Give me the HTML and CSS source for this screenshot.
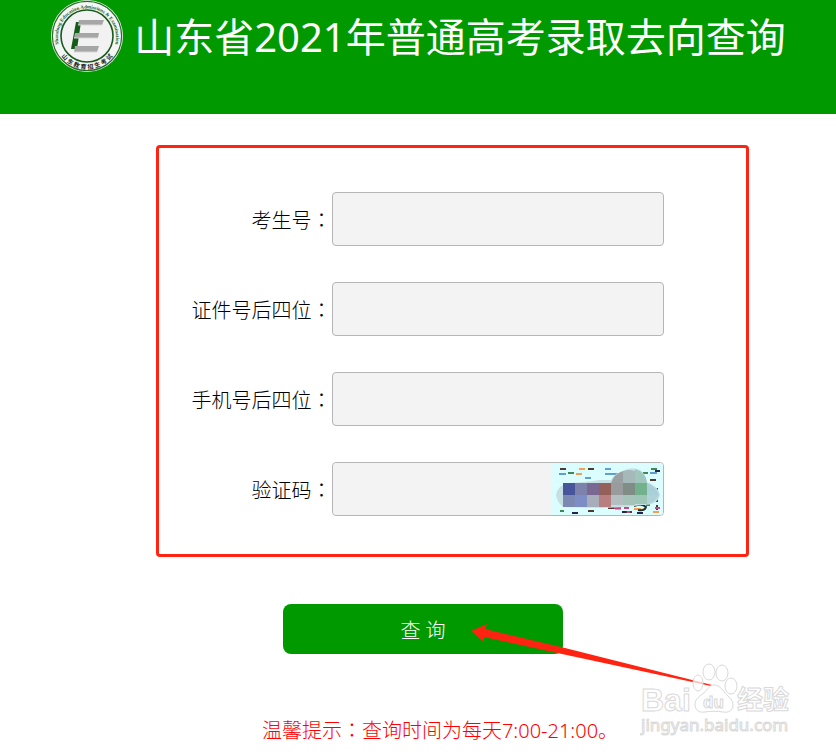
FILE: index.html
```
<!DOCTYPE html>
<html lang="zh-CN">
<head>
    <meta charset="UTF-8">
    <meta name="viewport" content="width=device-width, initial-scale=1.0">
    <title>山东省2021年普通高考录取去向查询</title>
    <link rel="stylesheet" href="styles.css">
</head>
<body>
    <header class="header">
        <svg class="logo" viewBox="0 0 74 74" aria-hidden="true">
            <defs>
                <path id="ringTop" d="M10 48 A29 29 0 1 1 64 48"/>
                <path id="ringBottom" d="M6 45 A32 32 0 0 0 68 45"/>
            </defs>
            <circle cx="37" cy="36" r="36" fill="#f4f6f4"/>
            <circle cx="37" cy="36" r="34.6" fill="none" stroke="#286b2c" stroke-width="1.2"/>
            <circle cx="37" cy="36" r="26" fill="#f2f2f2" stroke="#17591c" stroke-width="1.6"/>
            <path d="M26 22h5l-4 27h-6z" fill="#125c18"/>
            <path d="M29 20h25l-2 5H28zM25 33h24l-1 5H24zM25 46h24l-2 6H24z" fill="#a6a6a6"/>
            <path d="M28 25h24M24 38h24M24 52h23" stroke="#d8d8d8"/>
            <text class="logo-en"><textPath href="#ringTop" startOffset="50%">Shandong Education Admissions &amp; Examination</textPath></text>
            <text class="logo-cn"><textPath href="#ringBottom" startOffset="50%">山 东 教 育 招 生 考 试</textPath></text>
        </svg>
        <h1>山东省2021年普通高考录取去向查询</h1>
    </header>

    <form class="query-form">
        <div class="fields">
            <label for="examNo">考生号<span class="colon" lang="zh-TW">：</span></label>
            <input type="text" id="examNo">
            <label for="idNo">证件号后四位<span class="colon" lang="zh-TW">：</span></label>
            <input type="text" id="idNo">
            <label for="phone">手机号后四位<span class="colon" lang="zh-TW">：</span></label>
            <input type="text" id="phone">
            <label for="code">验证码<span class="colon" lang="zh-TW">：</span></label>
            <div class="code-box">
                <input type="text" id="code">
                <svg class="captcha" viewBox="0 0 111 52" role="img" aria-label="验证码图片">
                    <rect width="111" height="52" fill="#dcfdfd"/>
                    <path d="M8 6h6M36 6h6M48 43h6M36 48h6M72 49h8M56 45h6M98 17h6M105 25v4M105 35v4M105 42v5" stroke="#4b3b32" stroke-width="2"/>
                    <path d="M27 6h6M24 11h6M63 46h6M101 49h6M82 46h7" stroke="#f0a050" stroke-width="2"/>
                    <path d="M7 11h7M53 6h6M53 11h13M33 15h6M98 10h7" stroke="#5f9fd0" stroke-width="2"/>
                    <path d="M16 10h6M99 6h6M91 10h5M94 42h4M8 48h4" stroke="#3b8a55" stroke-width="2"/>
                    <path d="M20 50h6M85 50h6M70 49h4M103 8h5" stroke="#25244c" stroke-width="2"/>
                    <path d="M62 45h7M72 45h5M103 45h5M75 49h3" stroke="#c04a86" stroke-width="2"/>
                    <path d="M82 43q8-3 12 1q-1 4-8 3" fill="none" stroke="#20352f" stroke-width="2"/>
                    <path d="M4 32q2-10 12-12q20-1 31-3h12q4-7 12-9q8-5 17-1q6 4 7 12q12 5 13 13q-2 10-17 10q-20 3-40 3l-40-1q-6-5-7-12z" fill="#c5dfe2"/>
                    <path d="M59 20q3-9 12-12v12z" fill="#9a9fa2"/>
                    <path d="M71 20V8q6-2 12 0v12z" fill="#a5b8ba"/>
                    <path d="M83 20V6q11 3 12 14z" fill="#9ec6bd"/>
                    <path d="M11 20h12v12H11z" fill="#48559a"/>
                    <path d="M23 20h12v12H23z" fill="#7d82ad"/>
                    <path d="M35 20h12v12H35z" fill="#7b6892"/>
                    <path d="M47 20h12v12H47z" fill="#936159"/>
                    <path d="M59 20h12v12H59z" fill="#989c9d"/>
                    <path d="M71 20h12v12H71z" fill="#7f8d86"/>
                    <path d="M83 20h12v12H83z" fill="#72b18c"/>
                    <path d="M95 20q10 4 12 12H95z" fill="#a9d0d8"/>
                    <path d="M11 32h12v12H11z" fill="#7b89b2"/>
                    <path d="M23 32h12v12H23z" fill="#7d8ec6"/>
                    <path d="M35 32h12v12H35z" fill="#a7adb9"/>
                    <path d="M47 32h12v12H47z" fill="#b87f80"/>
                    <path d="M59 32h12v10H59z" fill="#b3bfc1"/>
                    <path d="M71 32h12v10H71z" fill="#a5c3b9"/>
                    <path d="M83 32h12v9H83z" fill="#9dc6b7"/>
                    <path d="M95 32h12q-3 7-12 9z" fill="#aed2d8"/>
                </svg>
            </div>
        </div>

        <div class="actions">
            <button type="submit">查 询</button>
            <svg class="arrow" viewBox="0 0 244 64" aria-hidden="true">
                <path d="M1 7 17 0 15 5 95 24 242 61 241 62 92 30 14 13 14 18z" fill="#ff2311"/>
            </svg>
            <svg class="watermark" viewBox="0 0 156 76" aria-hidden="true">
                <text class="wm-name" x="1" y="50">Bai</text>
                <path class="wm-paw" d="M74 24c5 0 8 4 11 8c4 4 8 7 8 12c0 6-5 8-10 7c-6-1-12-1-18 0c-6 1-10-2-10-8c0-5 5-8 9-11c4-4 5-8 10-8z"/>
                <ellipse class="wm-paw" cx="58" cy="22" rx="5" ry="8"/>
                <ellipse class="wm-paw" cx="69" cy="11" rx="6" ry="8"/>
                <ellipse class="wm-paw" cx="82" cy="12" rx="6" ry="8"/>
                <ellipse class="wm-paw" cx="91" cy="25" rx="6" ry="8"/>
                <text class="wm-du" x="63" y="47">du</text>
                <text class="wm-cn" x="97" y="48">经验</text>
                <text class="wm-url" x="1" y="70">jingyan.baidu.com</text>
            </svg>
        </div>
    </form>

    <p class="tip">温馨提示<span class="colon" lang="zh-TW">：</span>查询时间为每天7:00-21:00。</p>
</body>
</html>
```

FILE: styles.css
```
* {
    box-sizing: border-box;
}
body {
    margin: 0;
    background-color: #fff;
    color: #000;
    font-family: "Noto Sans", "Noto Sans CJK SC", sans-serif;
    font-size: 20px;
}
.header {
    display: flex;
    justify-content: center;
    align-items: flex-start;
    gap: 10px;
    padding-bottom: 40px;
    background-color: #009900;
}
.logo {
    flex: none;
    width: 74px;
    height: 74px;
}
.logo-en {
    font-family: "Liberation Serif", serif;
    font-size: 5px;
    font-weight: bold;
    fill: #17591c;
    text-anchor: middle;
}
.logo-cn {
    font-size: 6px;
    font-weight: bold;
    fill: #222;
    text-anchor: middle;
}
h1 {
    margin: 0;
    color: #fff;
    font-size: 40px;
    font-weight: normal;
    line-height: 74px;
}
.query-form {
    padding-top: 31px;
}
.fields {
    display: grid;
    grid-template-columns: 1fr 332px;
    row-gap: 36px;
    align-items: center;
    max-width: 593px;
    margin: 0 auto;
    padding: 44px 82px 38px 0;
    border: 3px solid #ff2311;
    border-radius: 4px;
    position: relative;
    left: 34px;
}
label {
    text-align: right;
    font-weight: 300;
}
.colon {
    font-family: "Noto Sans CJK TC", sans-serif;
}
input {
    width: 100%;
    height: 54px;
    padding: 0 10px;
    border: 1px solid #b5b5b5;
    border-radius: 4px;
    background-color: #f3f3f3;
    font-family: inherit;
    font-size: 20px;
}
.code-box {
    display: flex;
    align-items: center;
    border: 1px solid #b5b5b5;
    border-radius: 4px;
    background-color: #f3f3f3;
    overflow: hidden;
}
.code-box input {
    flex: 1;
    min-width: 0;
    height: 52px;
    border: none;
}
.captcha {
    flex: none;
    width: 111px;
    height: 52px;
}
.actions {
    position: relative;
    display: flex;
    justify-content: center;
    padding-top: 47px;
    padding-left: 10px;
}
button {
    width: 280px;
    height: 50px;
    border: none;
    border-radius: 8px;
    background-color: #009900;
    color: #fff;
    font-family: inherit;
    font-size: 20px;
    font-weight: 300;
    cursor: pointer;
}
button:hover {
    background-color: #008500;
}
/* 箭头和水印浮在按钮上方 */
.arrow {
    position: absolute;
    top: 67px;
    left: calc(50% + 52px);
    width: 244px;
    height: 64px;
    pointer-events: none;
}
.watermark {
    position: absolute;
    top: 104px;
    left: calc(50% + 222px);
    width: 156px;
    height: 76px;
    pointer-events: none;
}
.watermark text,
.wm-paw {
    fill: #fff;
    fill-opacity: 0.7;
    stroke: #d9d9d9;
    stroke-width: 1px;
}
.wm-name {
    font-family: "Liberation Sans", sans-serif;
    font-size: 32px;
    font-weight: bold;
}
.wm-du {
    font-family: "Liberation Sans", sans-serif;
    font-size: 17px;
    font-weight: bold;
}
.wm-cn {
    font-size: 26px;
    font-weight: bold;
}
.wm-url {
    font-size: 17px;
}
.tip {
    margin: 0;
    padding: 62px 0 8px 44px;
    color: #ff0000;
    font-weight: 300;
    line-height: 28px;
    text-align: center;
}
```
